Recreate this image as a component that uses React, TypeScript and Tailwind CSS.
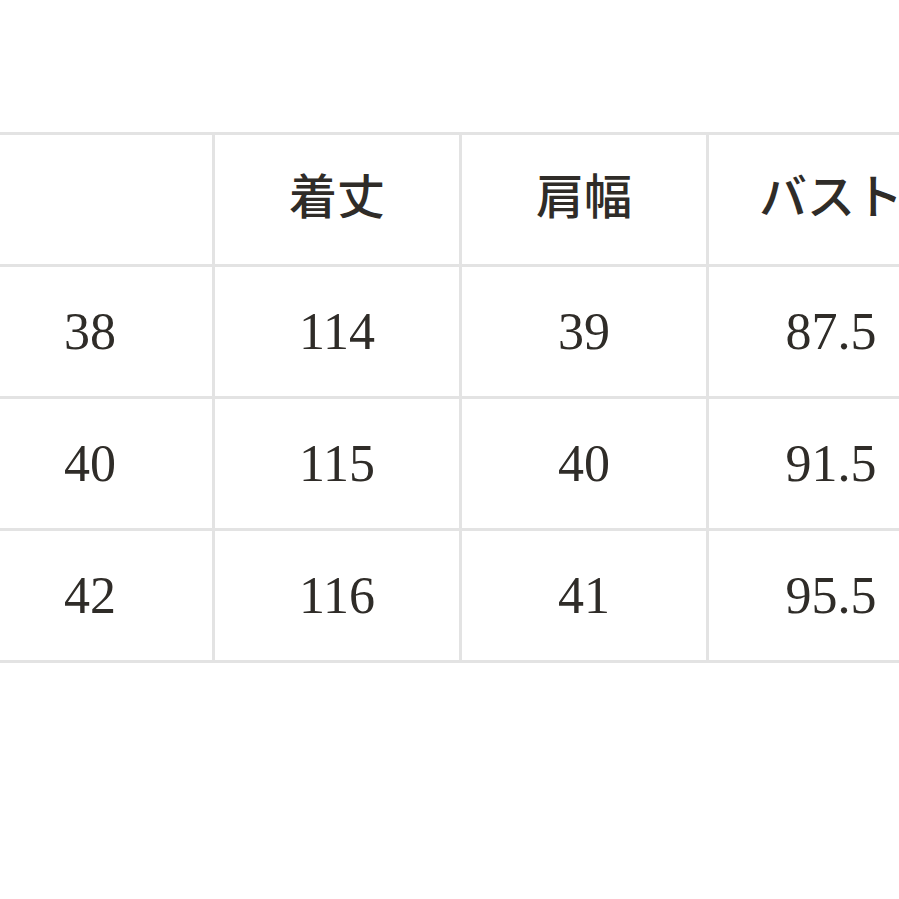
const header = ['', '着丈', '肩幅', 'バスト'];

const rows = [
  ['38', '114', '39', '87.5'],
  ['40', '115', '40', '91.5'],
  ['42', '116', '41', '95.5'],
];

export default function App() {
  return (
    <div className="w-[899px] h-[899px] overflow-hidden bg-white">
      <div className="mt-[132px] -ml-[35px] w-max border-t-[3px] border-l-[3px] border-[#e3e3e3]">
        {/* header row */}
        <div className="flex">
          {header.map((h, i) => (
            <div
              key={i}
              className="w-[247px] h-[132px] shrink-0 border-r-[3px] border-b-[3px] border-[#e3e3e3] flex items-center justify-center pb-[14px] text-[48px] font-medium text-[#2f2c28] whitespace-nowrap [font-family:'Noto_Sans_CJK_JP',sans-serif]"
            >
              {h}
            </div>
          ))}
        </div>

        {/* size rows */}
        {rows.map((r, ri) => (
          <div key={ri} className="flex">
            {r.map((v, ci) => (
              <div
                key={ci}
                className="w-[247px] h-[132px] shrink-0 border-r-[3px] border-b-[3px] border-[#e3e3e3] flex items-center justify-center text-[52px] text-[#2f2c28] [font-family:'Liberation_Serif',serif]"
              >
                {v}
              </div>
            ))}
          </div>
        ))}
      </div>
    </div>
  );
}
